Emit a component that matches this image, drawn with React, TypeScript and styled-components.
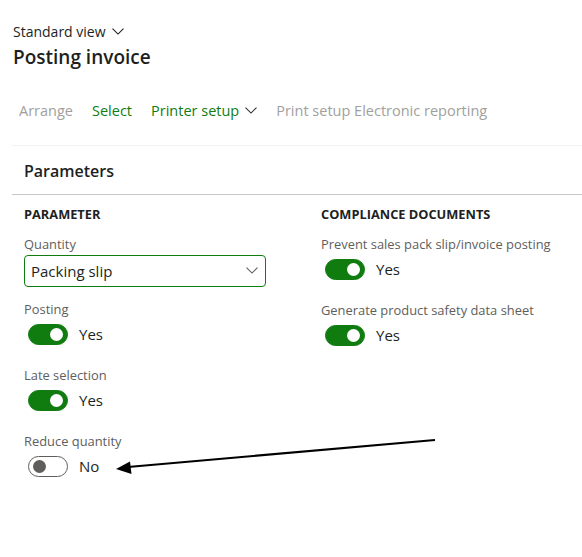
import React from 'react';
import styled, { createGlobalStyle } from 'styled-components';

const GlobalStyle = createGlobalStyle`
  body {
    margin: 0;
    background: #fff;
    font-family: 'Segoe UI', 'Open Sans', 'Noto Sans', sans-serif;
    color: #201f1e;
  }
`;

const Page = styled.div`
  position: relative;
  width: 582px;
  height: 557px;
  overflow: hidden;
  padding-top: 22px;
  box-sizing: border-box;
`;

const Header = styled.div`
  padding-left: 13px;
`;

const ViewPicker = styled.div`
  display: flex;
  align-items: center;
  gap: 6px;
  font-size: 14px;
  line-height: 20px;
  color: #201f1e;
`;

const Title = styled.h1`
  margin: 1px 0 0;
  font-size: 19px;
  font-weight: 600;
  line-height: 28px;
`;

const Toolbar = styled.div`
  display: flex;
  align-items: center;
  height: 36px;
  margin-top: 22px;
  padding-left: 13px;
`;

const ToolButton = styled.div<{ $tone: 'muted' | 'accent' }>`
  display: flex;
  align-items: center;
  gap: 6px;
  padding: 0 6px;
  margin-right: 7px;
  font-size: 14.5px;
  line-height: 20px;
  white-space: nowrap;
  color: ${p => (p.$tone === 'accent' ? '#107c10' : '#a19f9d')};
`;

const Card = styled.section`
  margin: 16px 0 0 12px;
  border-top: 1px solid #f3f2f1;
`;

const CardHeader = styled.div`
  padding: 13px 12px 11px;
  font-size: 16px;
  font-weight: 600;
  line-height: 24px;
  border-bottom: 1px solid #c8c6c4;
`;

const Columns = styled.div`
  display: grid;
  grid-template-columns: 297px 1fr;
  padding: 9px 0 0 12px;
`;

const Column = styled.div`
  display: flex;
  flex-direction: column;
`;

const GroupTitle = styled.div`
  font-size: 12.8px;
  font-weight: 700;
  line-height: 20px;
  text-transform: uppercase;
  margin-bottom: 10px;
`;

const Field = styled.div<{ $gap: number }>`
  padding-bottom: ${p => p.$gap}px;
`;

const Label = styled.div`
  font-size: 12.9px;
  line-height: 20px;
  color: #605e5c;
  white-space: nowrap;
`;

const Select = styled.div`
  box-sizing: border-box;
  margin-top: 1px;
  width: 242px;
  height: 32px;
  border: 1px solid #107c10;
  border-radius: 4px;
  display: flex;
  align-items: center;
  justify-content: space-between;
  padding: 0 7px 0 6px;
  font-size: 15px;
  color: #201f1e;
`;

const ToggleRow = styled.div`
  display: flex;
  align-items: center;
  height: 30px;
  padding-left: 4px;
  gap: 11px;
  font-size: 15px;
`;

const Track = styled.span<{ $on: boolean }>`
  position: relative;
  box-sizing: border-box;
  width: 40px;
  height: 21px;
  border-radius: 11px;
  background: ${p => (p.$on ? '#107c10' : '#fff')};
  border: 1px solid ${p => (p.$on ? '#107c10' : '#605e5c')};
`;

const Knob = styled.span<{ $on: boolean }>`
  position: absolute;
  top: 3px;
  ${p => (p.$on ? 'right: 4px;' : 'left: 4px;')}
  width: 13px;
  height: 13px;
  border-radius: 50%;
  background: ${p => (p.$on ? '#fff' : '#605e5c')};
`;

const Arrow = styled.svg`
  position: absolute;
  left: 0;
  top: 0;
  pointer-events: none;
`;

const Chevron = ({ size = 12, color = '#201f1e' }: { size?: number; color?: string }) => (
  <svg width={size} height={size * 0.6} viewBox="0 0 12 7">
    <path d="M0.5 0.5 L6 6 L11.5 0.5" fill="none" stroke={color} strokeWidth="1.1" />
  </svg>
);

const Toggle = ({ on }: { on: boolean }) => (
  <ToggleRow>
    <Track $on={on}>
      <Knob $on={on} />
    </Track>
    <span>{on ? 'Yes' : 'No'}</span>
  </ToggleRow>
);

const ToggleField = ({ label, on }: { label: string; on: boolean }) => (
  <Field $gap={16}>
    <Label>{label}</Label>
    <Toggle on={on} />
  </Field>
);

export default function App() {
  return (
    <Page>
      <GlobalStyle />
      <Header>
        <ViewPicker>
          Standard view <Chevron />
        </ViewPicker>
        <Title>Posting invoice</Title>
      </Header>

      <Toolbar>
        <ToolButton $tone="muted">Arrange</ToolButton>
        <ToolButton $tone="accent">Select</ToolButton>
        <ToolButton $tone="accent">
          Printer setup <Chevron color="#323130" />
        </ToolButton>
        <ToolButton $tone="muted">Print setup Electronic reporting</ToolButton>
      </Toolbar>

      <Card>
        <CardHeader>Parameters</CardHeader>
        <Columns>
          <Column>
            <GroupTitle>Parameter</GroupTitle>
            <Field $gap={12}>
              <Label>Quantity</Label>
              <Select>
                Packing slip
                <Chevron size={12} color="#605e5c" />
              </Select>
            </Field>
            <ToggleField label="Posting" on />
            <ToggleField label="Late selection" on />
            <ToggleField label="Reduce quantity" on={false} />
          </Column>
          <Column>
            <GroupTitle>Compliance documents</GroupTitle>
            <ToggleField label="Prevent sales pack slip/invoice posting" on />
            <ToggleField label="Generate product safety data sheet" on />
          </Column>
        </Columns>
      </Card>

      <Arrow width="582" height="557" viewBox="0 0 582 557">
        <line x1="435" y1="440" x2="128" y2="467" stroke="#000" strokeWidth="2.2" />
        <polygon points="116,469 130,461.5 131.5,474" fill="#000" />
      </Arrow>
    </Page>
  );
}
